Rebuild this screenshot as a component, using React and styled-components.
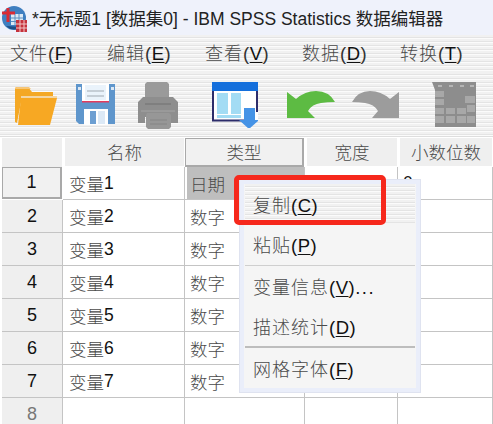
import React from "react";
import styled, { createGlobalStyle } from "styled-components";

const stripes = `repeating-linear-gradient(to bottom, #f1f1f1 0, #f1f1f1 2px, #e4e4e4 2px, #e4e4e4 3px, #fbfbfb 3px, #fbfbfb 4px)`;
const LINE = "#c4c4c4";

const GlobalStyle = createGlobalStyle`
    html, body {
        margin: 0;
        padding: 0;
        background: #fff;
    }

    body {
        font-family: "Liberation Sans", "Noto Sans CJK SC", sans-serif;
        color: #111;
    }
`;

const Page = styled.div`
    position: relative;
    width: 493px;
    height: 424px;
    overflow: hidden;
    background: #fff;
`;

const TitleBar = styled.div`
    display: flex;
    align-items: center;
    height: 35px;
    padding-left: 2px;
    background: #eff2fb;
`;

const TitleText = styled.div`
    margin-left: 4px;
    font-size: 17.5px;
    color: #222;
    white-space: nowrap;
`;

const MenuBar = styled.div`
    display: flex;
    align-items: center;
    height: 37px;
    padding: 0 0 3px 10px;
    box-sizing: border-box;
    background: ${stripes};
`;

const MenuItem = styled.div`
    width: ${props => props.$width}px;
    font-size: 18px;
    color: #333;
    white-space: nowrap;
`;

const Han = styled.span`
    color: #4a4a4a;
    font-weight: 300;
    letter-spacing: ${props => props.$spaced ? 1 : 0}px;
`;

const Key = styled.span`
    color: #111;
    text-decoration: underline;
    text-underline-offset: 2px;
`;

const Hot = styled.span`
    font-size: 18.5px;
    letter-spacing: 0.5px;
`;

const Dots = styled.span`
    letter-spacing: 1.5px;
`;

const Toolbar = styled.div`
    display: flex;
    align-items: flex-start;
    height: 65px;
    padding: 10px 0 0 15px;
    box-sizing: border-box;
    background: ${stripes};
    border-bottom: 1px solid #dedede;
`;

const ToolIcon = styled.svg`
    display: block;
    flex: none;
    margin-left: ${props => props.$gap || 0}px;
    margin-top: ${props => props.$top || 0}px;
`;

const Sheet = styled.div`
    display: grid;
    grid-template-columns: 61px 122px 120px 93px 95px;
    grid-template-rows: 29px repeat(7, 33px) 33px;
    padding-left: 2px;
    padding-top: 1px;
    background: #fff;
`;

const Corner = styled.div`
    background: #efefef;
    margin-right: 1px;
`;

const ColumnHead = styled.div`
    display: flex;
    align-items: center;
    justify-content: center;
    box-sizing: border-box;
    margin: 0 1px 1px 2px;
    padding-bottom: 2px;
    font-size: 17.5px;
    background: #efefef;
    ${props => props.$active && `
        margin: 0 1px 0 0;
        background: #f1f1f1;
        border: 1px solid #a9a9a9;
        border-right-width: 2px;
        border-bottom-width: 2px;
    `}
`;

const RowHead = styled.div`
    display: flex;
    align-items: center;
    justify-content: center;
    box-sizing: border-box;
    font-size: 18px;
    color: ${props => props.$dim ? "#777" : "#111"};
    background: #efefef;
    border-bottom: 1px solid ${LINE};
    border-right: 1px solid ${LINE};
    ${props => props.$active && `
        background: #f1f1f1;
        border: 1px solid #a9a9a9;
        border-right-width: 2px;
        border-bottom-width: 2px;
        margin: 0 1px 1px 0;
    `}
`;

const Cell = styled.div`
    display: flex;
    align-items: center;
    box-sizing: border-box;
    padding-left: ${props => props.$pad || 5}px;
    font-size: 17.5px;
    background: #fff;
    border-right: 1px solid ${LINE};
    border-bottom: 1px solid ${LINE};
    white-space: nowrap;
`;

const SelectedFill = styled.div`
    display: flex;
    align-items: center;
    flex: 1;
    height: 100%;
    margin-left: -3px;
    padding-left: 3px;
    background: #bebebe;
`;

const ContextMenu = styled.div`
    position: absolute;
    left: 239px;
    top: 179px;
    width: 182px;
    height: 214px;
    box-sizing: border-box;
    padding: 4px 5px;
    background: #f5f5f5;
    border: 1px solid #dfe3f0;
    box-shadow: inset 0 0 0 4px #eaeefa;
    display: flex;
    flex-direction: column;
`;

const ContextItem = styled.div`
    display: flex;
    align-items: center;
    height: ${props => props.$height || 41}px;
    padding-left: 8px;
    font-size: 18px;
    white-space: nowrap;
    ${props => props.$striped && `background: ${stripes};`}
`;

const ContextLine = styled.div`
    flex: none;
    height: ${props => props.$thick ? 2 : 1}px;
    background: ${props => props.$thick ? "#bdbdbd" : "#cfcfcf"};
`;

const Highlight = styled.div`
    position: absolute;
    left: 234px;
    top: 175px;
    width: 152px;
    height: 50px;
    box-sizing: border-box;
    border: 5px solid #f6281c;
    border-radius: 5px;
`;

const AppIcon = () => (
    <svg width="26" height="30" viewBox="0 0 26 30">
        <circle cx="12" cy="15" r="12" fill="#3f7fc0" />
        <path d="M4 23 a12 12 0 0 0 16 1 z" fill="#1d4f86" />
        <rect x="9" y="11" width="12" height="11" fill="#dbe9f5" />
        <path d="M9 15h12M9 18.500h12M13 11v11M17 11v11" stroke="#5c8fc0" />
        <path d="M6 5v14M0 10h13" stroke="#d92b35" strokeWidth="3" />
        <rect x="14" y="17" width="11" height="12" fill="#c5323c" />
        <path d="M14 21h11M14 25h11M18 17v12M22 17v12" stroke="#f2c6c6" />
    </svg>
);

const FolderIcon = () => (
    <ToolIcon width="42" height="40" viewBox="0 0 42 40" $top={3}>
        <path d="M0 37V4q0-2 2-2h11l4 5h21v5H7L2 38z" fill="#f4a825" />
        <path d="M0 4q0-2 2-2h12l2 2z" fill="#f6c677" />
        <path d="M6 13h36l-7 27H3z" fill="#f7a823" />
        <path d="M6 11h36v2H6z" fill="#f3d6a4" />
    </ToolIcon>
);

const SaveIcon = () => (
    <ToolIcon width="39" height="41" viewBox="0 0 39 41" $gap={19} $top={2}>
        <path d="M0 0h39v40H3l-3-3z" fill="#5f96cc" />
        <rect x="2" y="3" width="3" height="3" fill="#dbe7f3" />
        <rect x="35" y="3" width="3" height="3" fill="#dbe7f3" />
        <rect x="6" y="0" width="27" height="18" fill="#fff" />
        <rect x="9" y="1" width="21" height="15" fill="#eaf3fb" />
        <path d="M11 7h17M11 12h17" stroke="#b9c2ca" strokeWidth="1.500" />
        <rect x="6" y="17" width="27" height="1.500" fill="#e33a5c" />
        <rect x="8" y="25" width="24" height="16" fill="#fff" />
        <rect x="14" y="27" width="6" height="13" fill="#6d9fd2" />
        <rect x="22" y="27" width="7" height="13" fill="#dce9f6" />
    </ToolIcon>
);

const PrintIcon = () => (
    <ToolIcon width="40" height="47" viewBox="0 0 40 47" $gap={23}>
        <path d="M9 0h20l2 2v14H7V2z" fill="#9a9a9a" />
        <path d="M5 15h30l5 5v21H33v-6H7v6H0V20z" fill="#8e8e8e" />
        <path d="M7 22h26" stroke="#7a7a7a" strokeWidth="1.500" />
        <path d="M3 29h34" stroke="#a5a5a5" strokeWidth="1" />
        <path d="M9 31h22l2 2v12l-2 2H10l-2-2V33z" fill="#979797" />
        <path d="M12 38h17M12 42h17" stroke="#858585" strokeWidth="1" />
    </ToolIcon>
);

const WindowIcon = () => (
    <ToolIcon width="46" height="46" viewBox="0 0 46 46" $gap={34}>
        <rect x="0" y="0" width="46" height="38" fill="#fff" />
        <path d="M1 8v30.500h34" fill="none" stroke="#2d2d6b" strokeWidth="2" />
        <path d="M45 8v22" stroke="#2d2d6b" strokeWidth="2" />
        <rect x="0" y="0" width="46" height="9" fill="#146fdc" />
        <rect x="5" y="11" width="11" height="21" fill="#a3dcf4" />
        <rect x="19" y="11" width="10" height="21" fill="#a3dcf4" />
        <rect x="5" y="33" width="24" height="3" fill="#a3dcf4" />
        <path d="M32 26h11v12h4l-10 9-10-9h5z" fill="#4593e6" />
    </ToolIcon>
);

const UndoIcon = () => (
    <ToolIcon width="48" height="28" viewBox="0 0 48 28" $gap={29} $top={9}>
        <path d="M0 1L9 8Q18 0 29 0Q42 0 48 11Q40 11 34 12Q25 13 21 20L28 27H0z" fill="#5dbb43" />
    </ToolIcon>
);

const RedoIcon = () => (
    <ToolIcon width="47" height="28" viewBox="0 0 47 28" $gap={17} $top={9}>
        <path d="M47 1L38 8Q29 0 18 0Q6 0 0 11Q7 11 13 12Q22 13 26 20L20 27H47z" fill="#9c9c9c" />
    </ToolIcon>
);

const TableIcon = () => (
    <ToolIcon width="45" height="45" viewBox="0 0 45 45" $gap={33}>
        <path d="M0 0h44v45H3V8z" fill="#8d8d8d" />
        <path d="M6 4h4M17 4h4M28 4h4M38 4h4" stroke="#b5b5b5" strokeWidth="2" />
        <g fill="#a8a8a8">
            <rect x="3" y="9" width="9" height="6" />
            <rect x="3" y="17" width="9" height="6" />
            <rect x="3" y="26" width="9" height="6" />
            <rect x="3" y="34" width="9" height="7" />
            <rect x="14" y="26" width="9" height="6" />
            <rect x="14" y="34" width="9" height="7" />
            <rect x="25" y="26" width="9" height="6" />
            <rect x="25" y="34" width="9" height="7" />
            <rect x="33" y="14" width="10" height="7" />
            <rect x="35" y="23" width="8" height="7" />
            <rect x="35" y="34" width="8" height="7" />
        </g>
    </ToolIcon>
);

const menus = [
    { name: "文件", key: "F", width: 97 },
    { name: "编辑", key: "E", width: 98 },
    { name: "查看", key: "V", width: 97 },
    { name: "数据", key: "D", width: 98 },
    { name: "转换", key: "T", width: 80 },
];

const columns = ["名称", "类型", "宽度", "小数位数"];
const rows = [1, 2, 3, 4, 5, 6, 7];

const Hotkey = ({ name, hotkey, tail }) => (
    <span>
        <Han $spaced>{name}</Han><Hot>(<Key>{hotkey}</Key>){tail && <Dots>{tail}</Dots>}</Hot>
    </span>
);

const App = () => {
    return (
        <Page>
            <GlobalStyle />
            <TitleBar>
                <AppIcon />
                <TitleText>*无标题1 [数据集0] - IBM SPSS Statistics 数据编辑器</TitleText>
            </TitleBar>
            <MenuBar>
                {menus.map(menu => (
                    <MenuItem key={menu.name} $width={menu.width}>
                        <Hotkey name={menu.name} hotkey={menu.key} />
                    </MenuItem>
                ))}
            </MenuBar>
            <Toolbar>
                <FolderIcon />
                <SaveIcon />
                <PrintIcon />
                <WindowIcon />
                <UndoIcon />
                <RedoIcon />
                <TableIcon />
            </Toolbar>
            <Sheet>
                <Corner />
                {columns.map((col, i) => (
                    <ColumnHead key={col} $active={i === 1}>
                        <Han>{col}</Han>
                    </ColumnHead>
                ))}
                {rows.map(row => (
                    <React.Fragment key={row}>
                        <RowHead $active={row === 1}>{row}</RowHead>
                        <Cell $pad={6}>
                            <Han>变量</Han>{row}
                        </Cell>
                        <Cell>
                            {row === 1
                                ? <SelectedFill><Han>日期</Han></SelectedFill>
                                : <Han>数字</Han>}
                        </Cell>
                        <Cell />
                        <Cell>{row === 1 ? "0" : ""}</Cell>
                    </React.Fragment>
                ))}
                <RowHead $dim>8</RowHead>
                <Cell />
                <Cell />
                <Cell />
                <Cell />
            </Sheet>
            <ContextMenu>
                <ContextItem $striped $height={40}><Hotkey name="复制" hotkey="C" /></ContextItem>
                <ContextItem $height={42}><Hotkey name="粘贴" hotkey="P" /></ContextItem>
                <ContextLine />
                <ContextItem><Hotkey name="变量信息" hotkey="V" tail="..." /></ContextItem>
                <ContextItem $height={40}><Hotkey name="描述统计" hotkey="D" /></ContextItem>
                <ContextLine $thick />
                <ContextItem><Hotkey name="网格字体" hotkey="F" /></ContextItem>
            </ContextMenu>
            <Highlight />
        </Page>
    );
};

export default App;
